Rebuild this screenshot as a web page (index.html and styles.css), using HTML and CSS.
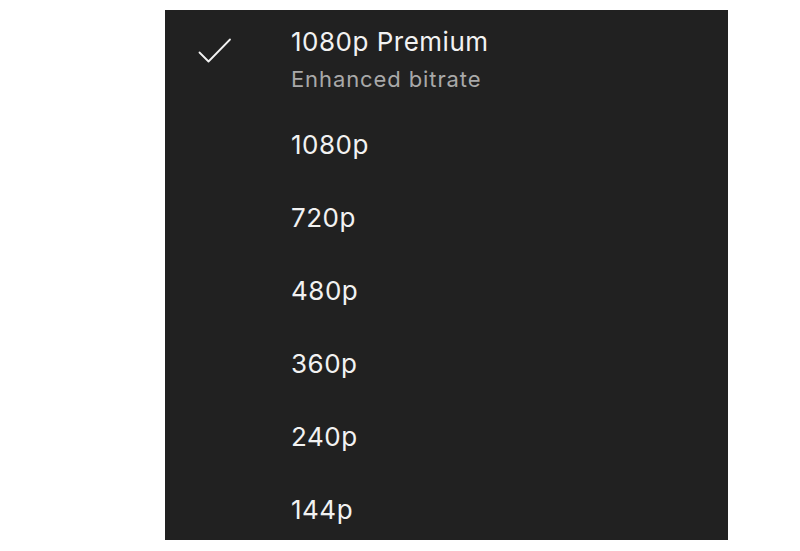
FILE: index.html
```html
<!DOCTYPE html>
<html lang="en">
<head>
  <meta charset="UTF-8" />
  <title>Quality</title>
  <link rel="stylesheet" href="styles.css">
</head>
<body>

  <div class="sheet">
    <ul class="quality-list">
      <li class="option selected">
        <span class="check">
          <svg width="34" height="26" viewBox="0 0 34 26">
            <path d="M1.5 14.5 L10.5 23.5 L32 1.5" fill="none" stroke="#f2f2f2" stroke-width="1.8" stroke-linecap="round" stroke-linejoin="round"/>
          </svg>
        </span>
        <div class="label">
          <div class="title">1080p Premium</div>
          <div class="sub">Enhanced bitrate</div>
        </div>
      </li>
      <li class="option"><span class="check"></span><div class="label"><div class="title">1080p</div></div></li>
      <li class="option"><span class="check"></span><div class="label"><div class="title">720p</div></div></li>
      <li class="option"><span class="check"></span><div class="label"><div class="title">480p</div></div></li>
      <li class="option"><span class="check"></span><div class="label"><div class="title">360p</div></div></li>
      <li class="option"><span class="check"></span><div class="label"><div class="title">240p</div></div></li>
      <li class="option"><span class="check"></span><div class="label"><div class="title">144p</div></div></li>
    </ul>
  </div>

</body>
</html>
```

FILE: styles.css
```css
body {
  margin: 0;
  background-color: #fff;
  font-family: Inter, Roboto, "Noto Sans", sans-serif;
}

.sheet {
  width: 563px;
  height: 530px;
  margin: 10px 0 0 165px;
  background-color: #212121;
  overflow: hidden;
}

.quality-list {
  list-style: none;
  margin: 0;
  padding: 0;
}

.option {
  display: flex;
  align-items: center;
  height: 73px;
}

.option.selected {
  height: 98px;
  align-items: flex-start;
}

.check {
  width: 126px;
  flex-shrink: 0;
  display: flex;
  padding-left: 33px;
  box-sizing: border-box;
}

.selected .check {
  padding-top: 28px;
}

.title {
  color: #f2f2f2;
  font-size: 26px;
  line-height: 32px;
  letter-spacing: 0.5px;
}

.selected .label {
  padding-top: 16px;
}

.sub {
  color: #a9a9a9;
  font-size: 22px;
  line-height: 30px;
  margin-top: 6px;
  letter-spacing: 0.9px;
}
```
